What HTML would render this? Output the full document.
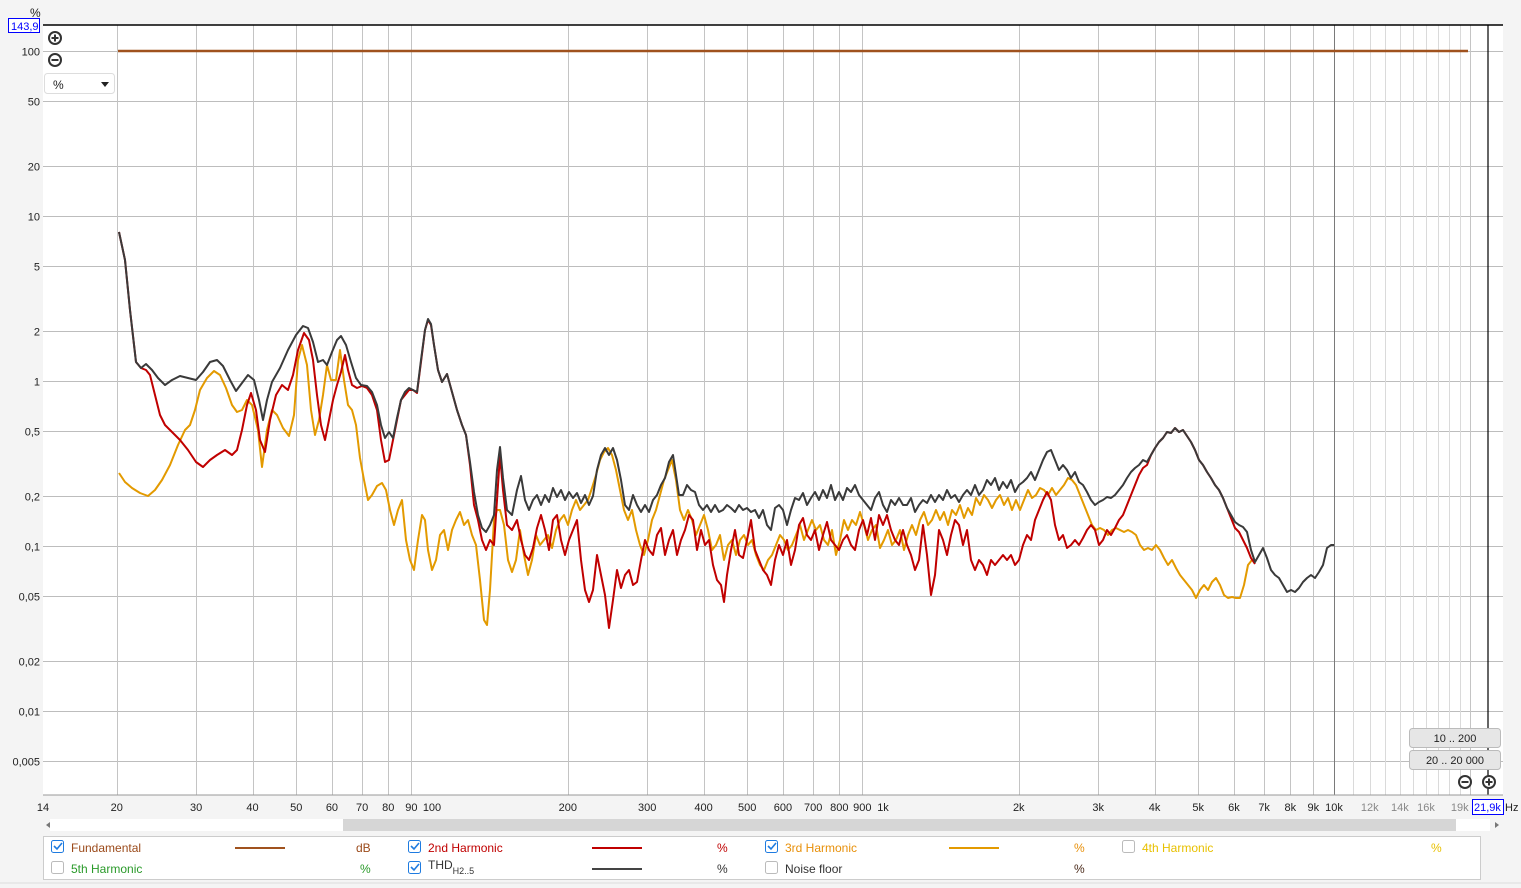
<!DOCTYPE html>
<html><head><meta charset="utf-8">
<style>
body{margin:0;background:#f4f4f4;width:1521px;height:888px;overflow:hidden;font-family:"Liberation Sans",sans-serif;}
svg{position:absolute;left:0;top:0}
text{font-family:"Liberation Sans",sans-serif;}
</style></head><body>
<svg id="s" width="1521" height="888" xmlns="http://www.w3.org/2000/svg">
<rect x="43" y="25" width="1460" height="770" fill="#fff"/>
<g id="grid"></g>
<g id="curves" fill="none" stroke-width="2" stroke-linejoin="round"></g>
<line x1="43" y1="25" x2="1503" y2="25" stroke="#000" stroke-width="1.5"/>
<line x1="1488" y1="25" x2="1488" y2="795" stroke="#000" stroke-width="1.2"/>
<line x1="43" y1="795" x2="1503" y2="795" stroke="#999"/>
<g id="labels" font-size="11" fill="#222"></g>
<text x="30" y="17" font-size="12" fill="#222">%</text>
<rect x="8.5" y="18.5" width="31" height="14" fill="#fff" stroke="#00f"/>
<text x="11" y="30" font-size="11" fill="#00f">143,9</text>
<circle cx="55" cy="38" r="6" fill="none" stroke="#333" stroke-width="2"/><path d="M51.5 38h7M55 34.5v7" stroke="#333" stroke-width="2"/>
<circle cx="55" cy="60" r="6" fill="none" stroke="#333" stroke-width="2"/><path d="M51.5 60h7" stroke="#333" stroke-width="2"/>
<rect x="44.5" y="73.5" width="70" height="20" rx="3" fill="#fff" stroke="#ddd"/>
<text x="53" y="89" font-size="12" fill="#222">%</text>
<path d="M101 82h8l-4 5z" fill="#222"/>
<rect x="1409.5" y="728.5" width="91" height="19" rx="3" fill="#e6e6e6" stroke="#bbb"/>
<text x="1455" y="742" font-size="11" text-anchor="middle" fill="#222">10 .. 200</text>
<rect x="1409.5" y="750.5" width="91" height="19" rx="3" fill="#e6e6e6" stroke="#bbb"/>
<text x="1455" y="764" font-size="11" text-anchor="middle" fill="#222">20 .. 20 000</text>
<circle cx="1465" cy="782" r="6" fill="#fff" stroke="#333" stroke-width="2"/><path d="M1461.5 782h7" stroke="#333" stroke-width="2"/>
<circle cx="1489" cy="782" r="6" fill="#fff" stroke="#333" stroke-width="2"/><path d="M1485.5 782h7M1489 778.5v7" stroke="#333" stroke-width="2"/>
<rect x="1472.5" y="799.5" width="31" height="15" fill="#fff" stroke="#00f"/>
<text x="1474" y="811" font-size="11" fill="#00f">21,9k</text>
<text x="1505" y="811" font-size="11" fill="#222">Hz</text>
<!-- scrollbar -->
<rect x="50" y="819" width="1440" height="12" fill="#fff"/>
<rect x="343" y="819" width="1113" height="12" fill="#d6d6d6"/>
<path d="M46 825l4-3v6z" fill="#777"/><path d="M1499 825l-4-3v6z" fill="#777"/>
<!-- legend -->
<rect x="43.5" y="836.5" width="1437" height="43" fill="#fff" stroke="#ccc"/>
<g font-size="12">
<rect x="51.5" y="840.5" width="12" height="12" rx="2" fill="#fff" stroke="#1e7be0"/><path d="M54 846l3 3 5-6" stroke="#1e7be0" stroke-width="1.6" fill="none"/>
<text x="71" y="852" fill="#9b4a1a">Fundamental</text>
<line x1="235" y1="848" x2="285" y2="848" stroke="#a0521e" stroke-width="2"/>
<text x="356" y="852" fill="#9b4a1a">dB</text>
<rect x="51.5" y="861.5" width="12" height="12" rx="2" fill="#fff" stroke="#bbb"/>
<text x="71" y="873" fill="#2a9a2a">5th Harmonic</text>
<text x="360" y="873" fill="#2a9a2a">%</text>
<rect x="408.5" y="840.5" width="12" height="12" rx="2" fill="#fff" stroke="#1e7be0"/><path d="M411 846l3 3 5-6" stroke="#1e7be0" stroke-width="1.6" fill="none"/>
<text x="428" y="852" fill="#c00000">2nd Harmonic</text>
<line x1="592" y1="848" x2="642" y2="848" stroke="#c00000" stroke-width="2"/>
<text x="717" y="852" fill="#c00000">%</text>
<rect x="408.5" y="861.5" width="12" height="12" rx="2" fill="#fff" stroke="#1e7be0"/><path d="M411 867l3 3 5-6" stroke="#1e7be0" stroke-width="1.6" fill="none"/>
<text x="428" y="869" fill="#333">THD<tspan font-size="9" dy="5">H2..5</tspan></text>
<line x1="592" y1="869" x2="642" y2="869" stroke="#444" stroke-width="2"/>
<text x="717" y="873" fill="#333">%</text>
<rect x="765.5" y="840.5" width="12" height="12" rx="2" fill="#fff" stroke="#1e7be0"/><path d="M768 846l3 3 5-6" stroke="#1e7be0" stroke-width="1.6" fill="none"/>
<text x="785" y="852" fill="#e8900a">3rd Harmonic</text>
<line x1="949" y1="848" x2="999" y2="848" stroke="#e39a00" stroke-width="2"/>
<text x="1074" y="852" fill="#e8900a">%</text>
<rect x="765.5" y="861.5" width="12" height="12" rx="2" fill="#fff" stroke="#bbb"/>
<text x="785" y="873" fill="#333">Noise floor</text>
<text x="1074" y="873" fill="#4a2a1a">%</text>
<rect x="1122.5" y="840.5" width="12" height="12" rx="2" fill="#fff" stroke="#bbb"/>
<text x="1142" y="852" fill="#e8c000">4th Harmonic</text>
<text x="1431" y="852" fill="#e8c000">%</text>
</g>
<line x1="0" y1="883" x2="1521" y2="883" stroke="#ddd"/>
</svg>
<script>
var NS="http://www.w3.org/2000/svg";
function el(p,t,a){var e=document.createElementNS(NS,t);for(var k in a)e.setAttribute(k,a[k]);p.appendChild(e);return e;}
var g=document.getElementById('grid'),L=document.getElementById('labels'),C=document.getElementById('curves');
function X(f){return 432+451*Math.log10(f/100);}
function Y(v){return 381-165*Math.log10(v);}
// horizontal
[[100,"100"],[50,"50"],[20,"20"],[10,"10"],[5,"5"],[2,"2"],[1,"1"],[0.5,"0,5"],[0.2,"0,2"],[0.1,"0,1"],[0.05,"0,05"],[0.02,"0,02"],[0.01,"0,01"],[0.005,"0,005"]].forEach(function(a){
 var y=Math.round(Y(a[0]))+0.5;
 el(g,'line',{x1:43,x2:1503,y1:y,y2:y,stroke:'#bdbdbd'});
 var t=el(L,'text',{x:40,y:y+4,'text-anchor':'end'});t.textContent=a[1];
});
// vertical
var fs=[];
for(var d=10;d<=1000;d*=10)for(var m=2;m<=9;m++)fs.push(m*d);
fs.push(10000);for(var k=11;k<=20;k++)fs.push(k*1000);
fs.forEach(function(f){
 var x=Math.round(X(f))+0.5;
 var major=(f==100||f==1000||f==10000);
 var col=major?'#7a7a7a':(f>10000&&f<20000?'#dadada':'#c4c4c4');
 el(g,'line',{x1:x,x2:x,y1:25,y2:795,stroke:col});
});
var lab=[[14,"14"],[20,"20"],[30,"30"],[40,"40"],[50,"50"],[60,"60"],[70,"70"],[80,"80"],[90,"90"],[100,"100"],[200,"200"],[300,"300"],[400,"400"],[500,"500"],[600,"600"],[700,"700"],[800,"800"],[900,"900"],[1000,"1k"],[2000,"2k"],[3000,"3k"],[4000,"4k"],[5000,"5k"],[6000,"6k"],[7000,"7k"],[8000,"8k"],[9000,"9k"],[10000,"10k"],[12000,"12k"],[14000,"14k"],[16000,"16k"],[19000,"19k"]];
lab.forEach(function(a){var x=a[0]==14?43:X(a[0]);var t=el(L,'text',{x:x,y:811,'text-anchor':'middle',fill:a[0]>10000?'#888':'#222'});t.textContent=a[1];});
function P(arr,col){el(C,'polyline',{points:arr.join(' '),stroke:col});}
var thd=[119,232,125,260,130,310,136,362,141,368,146,364,152,370,158,378,165,385,172,380,180,376,188,378,196,380,203,372,210,362,217,360,223,366,230,380,236,391,242,383,248,375,254,380,259,400,263,420,267,400,272,382,280,368,288,350,296,335,303,326,308,328,313,342,318,362,323,360,327,365,332,352,337,340,341,336,346,345,351,362,356,378,361,385,367,386,372,392,377,405,381,425,385,438,389,432,393,438,397,418,401,400,405,392,409,388,413,390,417,392,421,360,425,330,428,319,431,324,434,345,438,370,442,382,447,374,452,392,457,410,462,425,466,435,470,462,474,492,478,515,482,528,486,532,490,525,494,515,497,470,500,447,503,478,507,510,512,515,517,490,521,476,525,500,529,510,533,500,537,495,541,505,545,495,549,502,553,488,557,497,561,490,565,500,569,492,573,498,577,493,581,503,585,495,589,505,593,496,597,470,601,455,605,448,609,455,613,448,617,460,621,480,625,505,629,510,633,495,637,505,641,512,645,505,649,512,653,500,657,495,661,485,665,478,669,462,673,455,676,475,679,495,683,495,687,485,691,490,695,492,699,505,703,510,707,505,711,512,715,505,719,512,723,510,727,505,731,508,735,512,739,505,743,510,747,508,751,512,755,510,759,518,763,510,767,525,771,530,775,508,779,505,783,510,787,525,791,510,795,498,799,500,803,493,807,505,811,498,815,492,819,500,823,490,827,498,831,485,835,500,839,492,843,500,847,488,851,492,855,485,859,495,863,500,867,505,871,510,875,498,879,492,883,505,887,512,891,500,895,505,899,498,903,505,907,505,911,498,915,512,919,505,923,500,927,503,931,495,935,502,939,495,943,500,947,490,951,498,955,495,959,502,963,495,967,490,971,495,975,485,979,495,983,490,987,480,991,485,995,478,999,490,1003,482,1007,488,1011,480,1015,492,1019,485,1023,482,1027,478,1031,472,1035,480,1039,470,1043,460,1047,452,1051,450,1055,460,1059,470,1063,465,1067,470,1071,478,1075,472,1079,482,1083,485,1087,492,1091,500,1095,505,1099,502,1103,500,1107,497,1111,498,1115,495,1119,490,1123,485,1127,478,1131,472,1135,468,1139,465,1143,460,1147,462,1151,455,1155,448,1159,442,1163,438,1167,432,1171,433,1175,428,1179,432,1183,430,1187,436,1191,442,1195,450,1199,460,1203,465,1207,472,1211,478,1215,485,1219,490,1223,498,1227,508,1231,515,1235,522,1239,525,1243,527,1247,532,1251,550,1255,562,1259,555,1263,548,1267,558,1271,570,1275,575,1279,578,1283,585,1287,592,1291,590,1295,592,1299,588,1303,582,1307,578,1311,575,1315,578,1319,572,1323,565,1327,548,1331,545,1334,545];
var h2=[119,232,125,260,130,310,136,362,141,368,146,370,150,375,155,395,160,415,165,425,172,432,180,440,188,450,196,462,203,467,210,460,217,455,225,450,232,455,237,450,242,430,247,405,251,393,256,410,260,440,265,452,270,420,276,395,282,385,288,390,293,375,298,350,304,333,309,340,313,360,317,395,321,425,325,440,329,420,333,400,337,385,341,372,345,355,348,370,352,385,357,388,362,386,367,388,372,395,377,410,381,440,385,462,389,460,393,440,397,420,401,400,405,395,409,390,413,390,417,393,421,362,425,330,428,320,431,325,434,345,438,370,442,382,447,374,452,392,457,410,462,425,466,435,470,465,474,505,478,520,482,540,486,550,490,540,494,545,497,500,500,455,503,490,507,525,512,530,517,520,521,540,525,555,529,560,533,548,537,528,541,515,545,530,549,550,553,520,557,515,561,540,565,555,569,540,573,530,577,520,581,560,585,590,589,602,593,590,597,555,601,575,605,595,609,628,613,600,617,570,621,588,625,575,629,570,633,585,637,582,641,560,645,540,649,550,653,555,657,535,661,528,665,555,669,540,673,530,677,555,681,540,685,530,689,515,693,520,697,550,701,530,705,545,709,540,713,565,717,580,721,585,724,602,727,575,731,550,735,530,739,555,743,558,747,540,751,520,755,550,759,560,763,570,767,575,771,585,775,560,779,545,783,555,787,540,791,565,795,550,799,525,803,518,807,535,811,540,815,530,819,550,823,535,827,522,831,540,835,545,839,550,843,540,847,535,851,545,855,550,859,530,863,520,867,535,871,518,875,540,879,515,883,525,887,515,891,530,895,540,899,545,903,530,907,545,911,555,915,570,919,560,923,525,927,555,931,595,935,575,939,530,943,540,947,555,951,535,955,520,959,525,963,545,967,530,971,560,975,570,979,560,983,565,987,575,991,560,995,565,999,560,1003,555,1007,560,1011,555,1015,565,1019,560,1023,545,1027,535,1031,540,1035,520,1039,510,1043,500,1047,492,1051,500,1055,525,1059,540,1063,535,1067,548,1071,545,1075,540,1079,545,1083,538,1087,530,1091,525,1095,530,1099,545,1103,540,1107,530,1111,535,1115,528,1119,520,1123,515,1127,505,1131,495,1135,485,1139,475,1143,468,1147,465,1151,455,1155,448,1159,442,1163,438,1167,432,1171,433,1175,428,1179,432,1183,430,1187,436,1191,442,1195,450,1199,460,1203,465,1207,472,1211,478,1215,485,1219,490,1223,498,1227,508,1231,518,1235,528,1239,532,1243,540,1247,548,1251,558,1255,564];
var h3=[119,473,125,482,132,488,140,493,148,496,155,490,162,480,170,465,178,445,185,430,190,425,195,410,200,390,207,378,214,371,220,375,226,388,232,405,237,412,242,410,247,400,252,405,258,430,262,467,267,430,272,410,277,415,283,428,289,436,294,415,298,360,302,345,307,365,311,410,315,435,319,420,323,395,327,365,331,380,336,380,340,350,344,380,348,405,352,410,356,425,360,458,364,480,368,500,372,495,377,486,382,483,386,490,390,510,394,525,398,510,402,500,406,540,410,560,414,570,418,540,422,515,425,520,428,550,432,570,436,560,440,535,444,530,448,550,452,530,456,520,460,512,464,525,468,520,472,535,476,545,480,580,484,620,487,625,490,590,494,520,497,510,500,510,504,525,508,560,512,572,516,560,520,530,524,555,528,575,532,560,536,535,540,545,544,540,548,535,552,548,556,530,560,520,564,515,568,525,572,510,576,500,580,510,584,505,588,500,592,488,596,475,600,460,604,452,608,448,612,455,616,470,620,490,624,510,628,520,632,510,636,530,640,545,644,555,648,540,652,520,656,510,660,495,664,480,668,470,672,460,676,480,680,510,684,520,688,510,692,520,696,535,700,525,704,515,708,530,712,550,716,545,720,535,724,560,728,545,732,540,736,555,740,540,744,535,748,545,752,540,756,555,760,565,764,570,768,560,772,555,776,545,780,535,784,540,788,550,792,545,796,535,800,525,804,540,808,530,812,520,816,530,820,525,824,540,828,545,832,530,836,555,840,540,844,520,848,530,852,520,856,525,860,512,864,525,868,540,872,530,876,525,880,548,884,540,888,530,892,545,896,540,900,530,904,550,908,535,912,525,916,535,920,520,924,512,928,525,932,520,936,510,940,520,944,512,948,525,952,510,956,515,960,505,964,518,968,508,972,515,976,498,980,505,984,495,988,500,992,508,996,500,1000,495,1004,505,1008,498,1012,510,1016,500,1020,510,1024,500,1028,490,1032,498,1036,495,1040,488,1044,490,1048,495,1052,488,1056,495,1060,490,1064,485,1068,478,1072,480,1076,485,1080,495,1084,505,1088,515,1092,525,1096,530,1100,528,1104,530,1108,535,1112,530,1116,528,1120,530,1124,532,1128,530,1132,532,1136,535,1140,545,1144,550,1148,548,1152,550,1156,545,1160,550,1164,558,1168,565,1172,560,1176,568,1180,575,1184,580,1188,585,1192,590,1196,598,1200,590,1204,585,1208,590,1212,582,1216,578,1220,585,1224,595,1228,598,1232,597,1236,598,1240,598,1244,585,1248,565,1252,560];
el(C,'line',{x1:118,y1:51,x2:1468,y2:51,stroke:'#a0521e','stroke-width':2.5});
function pts(a){var r=[];for(var i=0;i<a.length;i+=2)r.push(a[i]+','+a[i+1]);return r;}
P(pts(h3),'#e39a00');
P(pts(h2),'#c00000');
P(pts(thd),'#3a3a3a');
</script>
</body></html>
